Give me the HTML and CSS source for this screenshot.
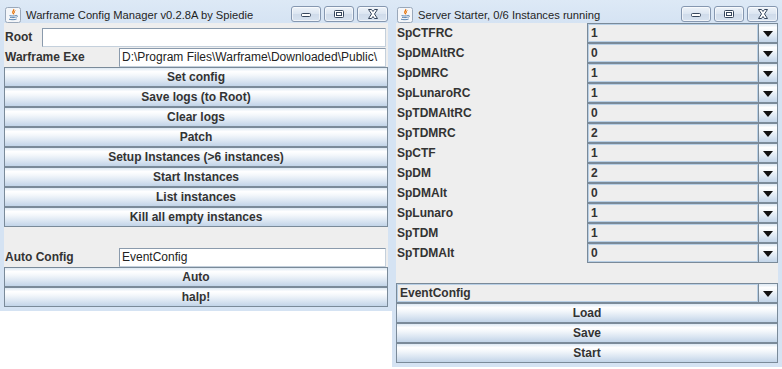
FILE: index.html
```html
<!DOCTYPE html>
<html>
<head>
<meta charset="utf-8">
<link rel="stylesheet" href="styles.css">
</head>
<body>
<div class="desk">
  <section class="win win-left">
    <header class="titlebar">
      <svg class="appicon" width="16" height="16" viewBox="0 0 16 16">
        <rect x="0.5" y="0.5" width="15" height="15" rx="2" fill="#f4f6f9" stroke="#9aa8ba"/>
        <path d="M8.5 2.2c1.2 1.2-1.6 2.2-0.6 3.6 0.4 0.6 0.9 0.8 0.7 1.6" fill="none" stroke="#e76f00" stroke-width="1.3"/>
        <path d="M10.4 3.6c-1.6 0.8-1.2 1.6-0.6 2.4" fill="none" stroke="#e76f00" stroke-width="1"/>
        <path d="M4.5 8.6c1.8 0.5 5 0.5 6.5 0M5 10.3c1.5 0.4 4.5 0.4 5.6 0M4 12.2c2 0.7 6.2 0.7 7.6-0.2M11.2 8.4c1.6-0.3 1.7 1.6 0 1.8" fill="none" stroke="#4a78a8" stroke-width="0.9"/>
      </svg>
      <span class="title">Warframe Config Manager v0.2.8A by Spiedie</span>
      <div class="wctl">
        <span class="wbtn"><svg width="12" height="8" viewBox="0 0 12 8"><rect x="1.5" y="3.5" width="9" height="3" rx="1" fill="#fff" stroke="#36465c"/></svg></span>
        <span class="wbtn"><svg width="12" height="10" viewBox="0 0 12 10"><rect x="1.5" y="1.5" width="9" height="7" rx="1" fill="#fff" stroke="#36465c"/><rect x="3.5" y="3.5" width="5" height="3" fill="#fff" stroke="#36465c"/></svg></span>
        <span class="wbtn wclose"><svg width="14" height="10" viewBox="0 0 14 10"><path d="M2.5 0.5h3l1.5 2 1.5-2h3l-3 4.5 3 4.5h-3L7 7.5 5.5 9.5h-3l3-4.5z" fill="#fff" stroke="#36465c"/></svg></span>
      </div>
    </header>
    <div class="content content-left">
      <div class="row">
        <label class="lbl lbl-root">Root</label>
        <div class="field"></div>
      </div>
      <div class="row">
        <label class="lbl lbl-exe">Warframe Exe</label>
        <div class="field">D:\Program Files\Warframe\Downloaded\Public\</div>
      </div>
      <button class="btn">Set config</button>
      <button class="btn">Save logs (to Root)</button>
      <button class="btn">Clear logs</button>
      <button class="btn">Patch</button>
      <button class="btn">Setup Instances (&gt;6 instances)</button>
      <button class="btn">Start Instances</button>
      <button class="btn">List instances</button>
      <button class="btn">Kill all empty instances</button>
      <div class="row"></div>
      <div class="row">
        <label class="lbl lbl-exe">Auto Config</label>
        <div class="field">EventConfig</div>
      </div>
      <button class="btn">Auto</button>
      <button class="btn">halp!</button>
    </div>
  </section>

  <section class="win win-right">
    <header class="titlebar">
      <svg class="appicon" width="16" height="16" viewBox="0 0 16 16">
        <rect x="0.5" y="0.5" width="15" height="15" rx="2" fill="#f4f6f9" stroke="#9aa8ba"/>
        <path d="M8.5 2.2c1.2 1.2-1.6 2.2-0.6 3.6 0.4 0.6 0.9 0.8 0.7 1.6" fill="none" stroke="#e76f00" stroke-width="1.3"/>
        <path d="M10.4 3.6c-1.6 0.8-1.2 1.6-0.6 2.4" fill="none" stroke="#e76f00" stroke-width="1"/>
        <path d="M4.5 8.6c1.8 0.5 5 0.5 6.5 0M5 10.3c1.5 0.4 4.5 0.4 5.6 0M4 12.2c2 0.7 6.2 0.7 7.6-0.2M11.2 8.4c1.6-0.3 1.7 1.6 0 1.8" fill="none" stroke="#4a78a8" stroke-width="0.9"/>
      </svg>
      <span class="title">Server Starter, 0/6 Instances running</span>
      <div class="wctl">
        <span class="wbtn"><svg width="12" height="8" viewBox="0 0 12 8"><rect x="1.5" y="3.5" width="9" height="3" rx="1" fill="#fff" stroke="#36465c"/></svg></span>
        <span class="wbtn"><svg width="12" height="10" viewBox="0 0 12 10"><rect x="1.5" y="1.5" width="9" height="7" rx="1" fill="#fff" stroke="#36465c"/><rect x="3.5" y="3.5" width="5" height="3" fill="#fff" stroke="#36465c"/></svg></span>
        <span class="wbtn wclose"><svg width="14" height="10" viewBox="0 0 14 10"><path d="M2.5 0.5h3l1.5 2 1.5-2h3l-3 4.5 3 4.5h-3L7 7.5 5.5 9.5h-3l3-4.5z" fill="#fff" stroke="#36465c"/></svg></span>
      </div>
    </header>
    <div class="content content-right">
      <div class="row"><label class="lbl lbl-mode">SpCTFRC</label><div class="combo"><span class="cval">1</span><span class="carrow"></span></div></div>
      <div class="row"><label class="lbl lbl-mode">SpDMAltRC</label><div class="combo"><span class="cval">0</span><span class="carrow"></span></div></div>
      <div class="row"><label class="lbl lbl-mode">SpDMRC</label><div class="combo"><span class="cval">1</span><span class="carrow"></span></div></div>
      <div class="row"><label class="lbl lbl-mode">SpLunaroRC</label><div class="combo"><span class="cval">1</span><span class="carrow"></span></div></div>
      <div class="row"><label class="lbl lbl-mode">SpTDMAltRC</label><div class="combo"><span class="cval">0</span><span class="carrow"></span></div></div>
      <div class="row"><label class="lbl lbl-mode">SpTDMRC</label><div class="combo"><span class="cval">2</span><span class="carrow"></span></div></div>
      <div class="row"><label class="lbl lbl-mode">SpCTF</label><div class="combo"><span class="cval">1</span><span class="carrow"></span></div></div>
      <div class="row"><label class="lbl lbl-mode">SpDM</label><div class="combo"><span class="cval">2</span><span class="carrow"></span></div></div>
      <div class="row"><label class="lbl lbl-mode">SpDMAlt</label><div class="combo"><span class="cval">0</span><span class="carrow"></span></div></div>
      <div class="row"><label class="lbl lbl-mode">SpLunaro</label><div class="combo"><span class="cval">1</span><span class="carrow"></span></div></div>
      <div class="row"><label class="lbl lbl-mode">SpTDM</label><div class="combo"><span class="cval">1</span><span class="carrow"></span></div></div>
      <div class="row"><label class="lbl lbl-mode">SpTDMAlt</label><div class="combo"><span class="cval">0</span><span class="carrow"></span></div></div>
      <div class="row"></div>
      <div class="row"><div class="combo"><span class="cval">EventConfig</span><span class="carrow"></span></div></div>
      <button class="btn">Load</button>
      <button class="btn">Save</button>
      <button class="btn">Start</button>
    </div>
  </section>
</div>
</body>
</html>
```

FILE: styles.css
```css
html, body {
  margin: 0;
  padding: 0;
  background: #ffffff;
}
body {
  font-family: "Liberation Sans", Arial, sans-serif;
  font-size: 12px;
  color: #333333;
}
.desk {
  display: flex;
  align-items: flex-start;
}
.win {
  box-sizing: border-box;
  background: #d5e3f3;
  padding: 0 4px 4px 4px;
  display: flex;
  flex-direction: column;
}
.win-left {
  width: 392px;
  height: 311px;
}
.win-right {
  width: 390px;
  height: 367px;
}
.titlebar {
  height: 23px;
  flex: none;
  display: flex;
  align-items: center;
  background: linear-gradient(#dde9f6, #d5e3f3);
  margin: 0 -4px;
  padding: 0 4px 0 5px;
}
.appicon {
  flex: none;
  margin-top: 6px;
}
.title {
  font-family: "Liberation Sans", Arial, sans-serif;
  font-size: 11.2px;
  color: #1f1f1f;
  margin-left: 5px;
  margin-top: 6px;
  white-space: nowrap;
}
.wctl {
  margin-left: auto;
  display: flex;
  gap: 3px;
  margin-top: 5px;
}
.wbtn {
  box-sizing: border-box;
  width: 30px;
  height: 16px;
  border: 1px solid #8597b0;
  border-radius: 3px;
  background: linear-gradient(#eef3f9, #dbe5f1 50%, #cfdbea 51%, #d8e3f0);
  box-shadow: inset 0 0 0 1px rgba(255,255,255,0.6);
  display: flex;
  align-items: center;
  justify-content: center;
}
.wclose {
  width: 31px;
}
.content {
  flex: 1;
  background: #eeeeee;
  display: flex;
  flex-direction: column;
}
.content-left {
  padding-top: 4px;
}
.row {
  height: 20px;
  flex: none;
  display: flex;
  align-items: center;
}
.lbl {
  font-weight: bold;
  color: #333333;
  padding-left: 1px;
  white-space: nowrap;
}
.lbl-root {
  width: 37px;
}
.lbl-exe {
  width: 114px;
}
.lbl-mode {
  width: 190px;
}
.field {
  box-sizing: border-box;
  flex: 1;
  height: 19px;
  margin-right: 2px;
  background: #ffffff;
  border: 1px solid #8a9aac;
  border-right-color: #c4d0dc;
  border-bottom-color: #c4d0dc;
  padding: 1px 2px;
  line-height: 15px;
  color: #222;
  white-space: nowrap;
  overflow: hidden;
}
.btn {
  box-sizing: border-box;
  display: block;
  width: 100%;
  height: 20px;
  flex: none;
  margin: 0;
  padding: 0;
  border: 1px solid #7a8a99;
  background: linear-gradient(#dde8f3 0%, #ffffff 20%, #f3f7fb 40%, #dbe6f2 70%, #c2d4e8 100%);
  font-family: "Liberation Sans", Arial, sans-serif;
  font-size: 12px;
  font-weight: bold;
  color: #333333;
  line-height: 18px;
}
.combo {
  box-sizing: border-box;
  flex: 1;
  height: 20px;
  display: flex;
  border: 1px solid #7a8a99;
  background: #eeeeee;
}
.cval {
  flex: 1;
  box-sizing: border-box;
  border: 1px solid #b8cfe5;
  padding-left: 2px;
  font-weight: bold;
  color: #333333;
  line-height: 16px;
}
.carrow {
  box-sizing: border-box;
  width: 19px;
  flex: none;
  border-left: 1px solid #7a8a99;
  background: linear-gradient(#dde8f3 0%, #ffffff 20%, #f3f7fb 40%, #dbe6f2 70%, #c2d4e8 100%);
  display: flex;
  align-items: center;
  justify-content: center;
}
.carrow::after {
  content: "";
  width: 0;
  height: 0;
  border-left: 5px solid transparent;
  border-right: 5px solid transparent;
  border-top: 6px solid #111;
  margin-top: 1px;
}
```
